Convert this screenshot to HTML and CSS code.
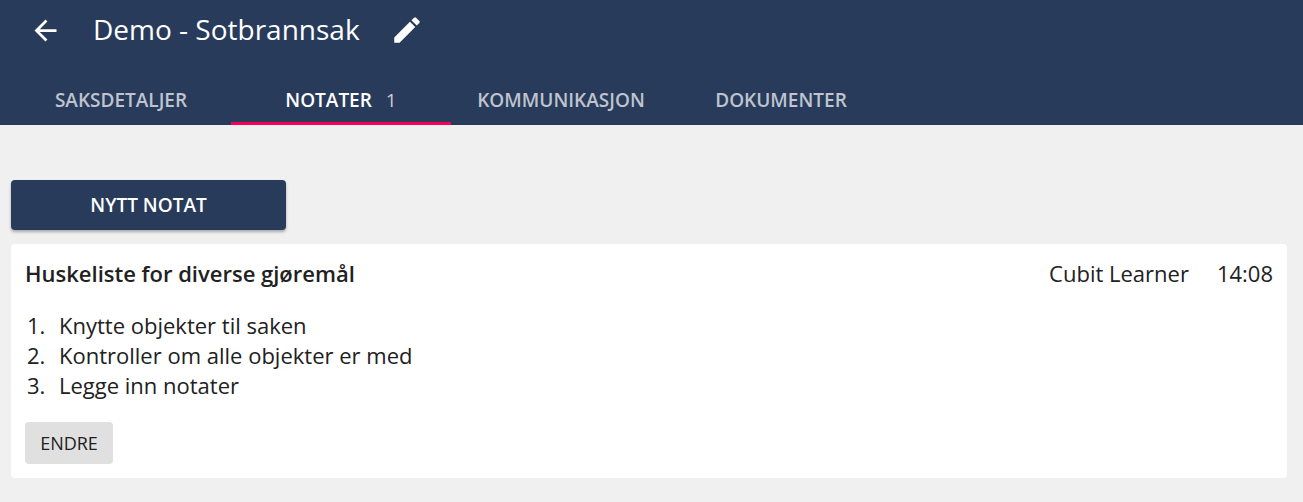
FILE: index.html
```html
<!DOCTYPE html>
<html lang="no">
<head>
<meta charset="utf-8">
<title>Demo - Sotbrannsak</title>
<link rel="stylesheet" href="styles.css">
</head>
<body>
<header class="topbar">
  <div class="title-row">
    <button class="icon-btn back" aria-label="Tilbake">
      <svg viewBox="0 0 24 24" width="33" height="33"><path fill="#fff" d="M20 11H7.83l5.59-5.59L12 4l-8 8 8 8 1.41-1.41L7.83 13H20v-2z"/></svg>
    </button>
    <h1 class="title">Demo - Sotbrannsak</h1>
    <button class="icon-btn edit" aria-label="Endre">
      <svg viewBox="0 0 24 24" width="34" height="34"><path fill="#fff" d="M3 17.25V21h3.75L17.81 9.94l-3.75-3.75L3 17.25zM20.71 7.04a1 1 0 0 0 0-1.41l-2.34-2.34a1 1 0 0 0-1.41 0l-1.83 1.83 3.75 3.75 1.83-1.83z"/></svg>
    </button>
  </div>
  <nav class="tabs">
    <a class="tab">SAKSDETALJER</a>
    <a class="tab active">NOTATER<span class="count">1</span></a>
    <a class="tab">KOMMUNIKASJON</a>
    <a class="tab">DOKUMENTER</a>
  </nav>
</header>
<main class="content">
  <button class="primary">NYTT NOTAT</button>
  <article class="card">
    <div class="card-head">
      <h2 class="note-title">Huskeliste for diverse gjøremål</h2>
      <div class="meta"><span>Cubit Learner</span><span>14:08</span></div>
    </div>
    <ol class="list">
      <li>Knytte objekter til saken</li>
      <li>Kontroller om alle objekter er med</li>
      <li>Legge inn notater</li>
    </ol>
    <button class="secondary">ENDRE</button>
  </article>
</main>
</body>
</html>
```
FILE: styles.css
```css
* { box-sizing: border-box; }
html, body { margin: 0; height: 100%; }
body { background: #f0f0f0; font-family: "Open Sans", sans-serif; color: #212121; overflow: hidden; }
button { font-family: inherit; border: 0; cursor: pointer; }
.topbar { background: #283b5b; height: 125px; display: flex; flex-direction: column; }
.title-row { display: flex; align-items: center; height: 60px; padding-left: 29px; }
.icon-btn { background: none; padding: 0; display: flex; }
.title { margin: 0 0 2px 31px; font-size: 28px; font-weight: 500; color: #fff; line-height: 60px; }
.edit { margin: 0 0 1px 30px; }
.tabs { display: flex; margin-top: 16px; height: 49px; padding-left: 11px; }
.tab { width: 220px; display: flex; align-items: center; justify-content: center; font-size: 19px; font-weight: 600; color: #bfc4ce; border-bottom: 3px solid transparent; padding-top: 1px; }
.active { color: #fff; border-bottom-color: #f50057; }
.count { margin-left: 14px; font-weight: 500; color: #c9ced6; }
.content { padding: 55px 16px 0 11px; display: flex; flex-direction: column; align-items: flex-start; }
.primary { width: 275px; height: 50px; background: #283b5b; color: #fff; font-size: 19px; font-weight: 600; border-radius: 4px; box-shadow: 0 2px 3px rgba(0,0,0,.3); }
.card { width: 100%; margin-top: 14px; height: 234px; background: #fff; border-radius: 4px; padding: 13px 14px 14px; }
.card-head { display: flex; justify-content: space-between; align-items: center; }
.note-title { margin: 0; font-size: 22px; font-weight: 600; line-height: 32px; }
.meta { display: flex; gap: 28px; font-size: 22px; line-height: 32px; }
.list { margin: 21px 0 0; padding: 0 0 0 26px; font-size: 22px; line-height: 30px; }
.list li { padding-left: 8px; }
.secondary { display: block; margin-top: 22px; width: 88px; height: 42px; background: #e0e0e0; color: #212121; font-size: 18px; font-weight: 500; border-radius: 4px; }
```
